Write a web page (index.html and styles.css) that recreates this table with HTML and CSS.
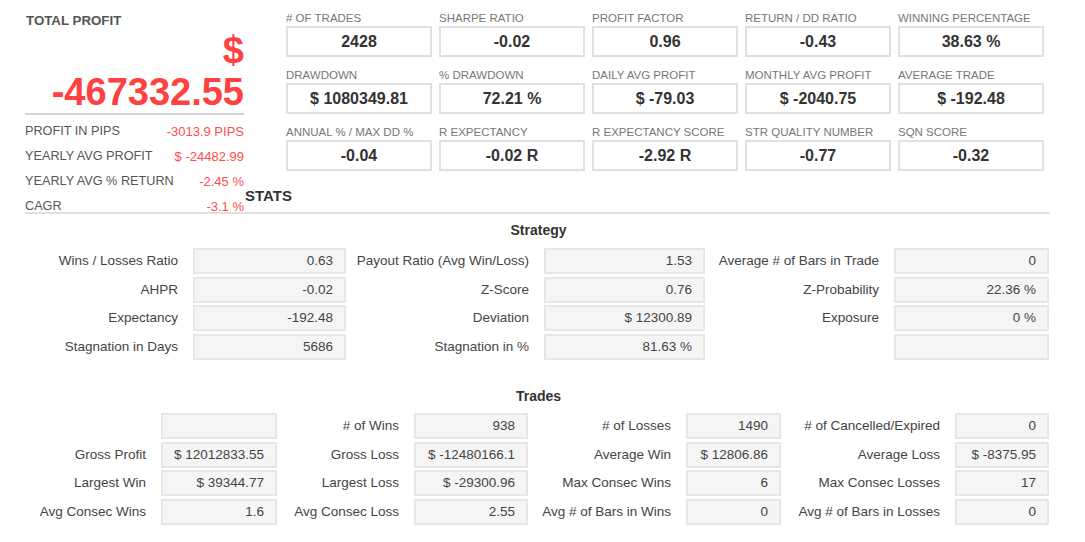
FILE: index.html
```html
<!DOCTYPE html>
<html>
<head>
<meta charset="utf-8">
<link rel="stylesheet" href="styles.css">
</head>
<body>
<div class="top">
  <div class="summary">
    <div class="sum-title">TOTAL PROFIT</div>
    <div class="sum-big"><div>$</div><div>-467332.55</div></div>
    <div class="sum-rows">
      <div class="sum-row"><span>PROFIT IN PIPS</span><span class="neg">-3013.9 PIPS</span></div>
      <div class="sum-row"><span>YEARLY AVG PROFIT</span><span class="neg">$ -24482.99</span></div>
      <div class="sum-row"><span>YEARLY AVG % RETURN</span><span class="neg">-2.45 %</span></div>
      <div class="sum-row"><span>CAGR</span><span class="neg">-3.1 %</span></div>
    </div>
  </div>
  <div class="right">
    <div class="metrics">
      <div class="metric"><div class="m-label"># OF TRADES</div><div class="m-box">2428</div></div>
      <div class="metric"><div class="m-label">SHARPE RATIO</div><div class="m-box">-0.02</div></div>
      <div class="metric"><div class="m-label">PROFIT FACTOR</div><div class="m-box">0.96</div></div>
      <div class="metric"><div class="m-label">RETURN / DD RATIO</div><div class="m-box">-0.43</div></div>
      <div class="metric"><div class="m-label">WINNING PERCENTAGE</div><div class="m-box">38.63 %</div></div>
      <div class="metric"><div class="m-label">DRAWDOWN</div><div class="m-box">$ 1080349.81</div></div>
      <div class="metric"><div class="m-label">% DRAWDOWN</div><div class="m-box">72.21 %</div></div>
      <div class="metric"><div class="m-label">DAILY AVG PROFIT</div><div class="m-box">$ -79.03</div></div>
      <div class="metric"><div class="m-label">MONTHLY AVG PROFIT</div><div class="m-box">$ -2040.75</div></div>
      <div class="metric"><div class="m-label">AVERAGE TRADE</div><div class="m-box">$ -192.48</div></div>
      <div class="metric"><div class="m-label">ANNUAL % / MAX DD %</div><div class="m-box">-0.04</div></div>
      <div class="metric"><div class="m-label">R EXPECTANCY</div><div class="m-box">-0.02 R</div></div>
      <div class="metric"><div class="m-label">R EXPECTANCY SCORE</div><div class="m-box">-2.92 R</div></div>
      <div class="metric"><div class="m-label">STR QUALITY NUMBER</div><div class="m-box">-0.77</div></div>
      <div class="metric"><div class="m-label">SQN SCORE</div><div class="m-box">-0.32</div></div>
    </div>
    <h4 class="stats-title">STATS</h4>
  </div>
</div>
<div class="rule"></div>

<div class="section-title strat-title">Strategy</div>
<div class="grid strat-grid">
  <div class="lbl">Wins / Losses Ratio</div><div class="val">0.63</div>
  <div class="lbl">Payout Ratio (Avg Win/Loss)</div><div class="val">1.53</div>
  <div class="lbl">Average # of Bars in Trade</div><div class="val">0</div>

  <div class="lbl">AHPR</div><div class="val">-0.02</div>
  <div class="lbl">Z-Score</div><div class="val">0.76</div>
  <div class="lbl">Z-Probability</div><div class="val">22.36 %</div>

  <div class="lbl">Expectancy</div><div class="val">-192.48</div>
  <div class="lbl">Deviation</div><div class="val">$ 12300.89</div>
  <div class="lbl">Exposure</div><div class="val">0 %</div>

  <div class="lbl">Stagnation in Days</div><div class="val">5686</div>
  <div class="lbl">Stagnation in %</div><div class="val">81.63 %</div>
  <div class="lbl"></div><div class="val"></div>
</div>

<div class="section-title trades-title">Trades</div>
<div class="grid trades-grid">
  <div class="lbl"></div><div class="val"></div>
  <div class="lbl"># of Wins</div><div class="val">938</div>
  <div class="lbl"># of Losses</div><div class="val">1490</div>
  <div class="lbl"># of Cancelled/Expired</div><div class="val">0</div>

  <div class="lbl">Gross Profit</div><div class="val">$ 12012833.55</div>
  <div class="lbl">Gross Loss</div><div class="val">$ -12480166.1</div>
  <div class="lbl">Average Win</div><div class="val">$ 12806.86</div>
  <div class="lbl">Average Loss</div><div class="val">$ -8375.95</div>

  <div class="lbl">Largest Win</div><div class="val">$ 39344.77</div>
  <div class="lbl">Largest Loss</div><div class="val">$ -29300.96</div>
  <div class="lbl">Max Consec Wins</div><div class="val">6</div>
  <div class="lbl">Max Consec Losses</div><div class="val">17</div>

  <div class="lbl">Avg Consec Wins</div><div class="val">1.6</div>
  <div class="lbl">Avg Consec Loss</div><div class="val">2.55</div>
  <div class="lbl">Avg # of Bars in Wins</div><div class="val">0</div>
  <div class="lbl">Avg # of Bars in Losses</div><div class="val">0</div>
</div>
</body>
</html>
```
FILE: styles.css
```css
* { box-sizing: border-box; }
body {
  margin: 0;
  background: #fff;
  font-family: "Liberation Sans", Arial, sans-serif;
  color: #444;
}
.top {
  display: flex;
  height: 212px;
}
.summary {
  width: 219px;
  margin-left: 25px;
  padding-top: 12px;
  flex: none;
}
.sum-title {
  font-size: 13.3px;
  font-weight: bold;
  line-height: 17px;
  color: #555;
  padding-left: 1px;
}
.sum-big {
  text-align: right;
  font-size: 38px;
  font-weight: bold;
  line-height: 42px;
  color: #ff4141;
  border-bottom: 2px solid #d4d4d4;
}
.sum-rows {
  padding-top: 3.5px;
}
.sum-row {
  display: flex;
  justify-content: space-between;
  font-size: 12.7px;
  line-height: 25px;
  color: #555;
  white-space: nowrap;
}
.neg { color: #ff4d4d; font-size: 13px; }
.right {
  flex: 1;
  padding-top: 12px;
}
.metrics {
  margin-left: 42px;
  display: grid;
  grid-template-columns: repeat(5, 146px);
  column-gap: 7px;
  row-gap: 12px;
}
.m-label {
  font-size: 11.5px;
  line-height: 13px;
  color: #777;
  margin-bottom: 1px;
  white-space: nowrap;
}
.m-box {
  height: 31px;
  border: 2px solid #e0e0e0;
  background: #fff;
  text-align: center;
  font-size: 16px;
  font-weight: bold;
  line-height: 27px;
  color: #333;
}
.stats-title {
  margin: 16px 0 0 1px;
  font-size: 15px;
  line-height: 17px;
  font-weight: bold;
  color: #333;
}
.rule {
  height: 2px;
  background: #e0e0e0;
  margin: 0 35px 0 25px;
}
.section-title {
  width: 1024px;
  margin-left: 25px;
  text-align: center;
  font-size: 14px;
  font-weight: bold;
  line-height: 16px;
  color: #333;
}
.strat-title { margin-top: 8px; padding-left: 3px; }
.trades-title { margin-top: 28px; padding-left: 3px; }
.grid {
  display: grid;
  width: 1024px;
  margin-left: 25px;
  grid-auto-rows: 26px;
  row-gap: 2.7px;
  font-size: 13.5px;
}
.strat-grid {
  margin-top: 10px;
  grid-template-columns: 168px 153px 198px 161px 189px 155px;
}
.trades-grid {
  margin-top: 9px;
  grid-template-columns: 136px 116px 137px 114px 158px 95px 174px 94px;
}
.lbl {
  text-align: right;
  padding-right: 15px;
  line-height: 26px;
  color: #444;
  white-space: nowrap;
}
.val {
  background: #f5f5f5;
  border: 2px solid #e6e6e6;
  text-align: right;
  padding-right: 11px;
  line-height: 22px;
  color: #444;
  white-space: nowrap;
}
```
